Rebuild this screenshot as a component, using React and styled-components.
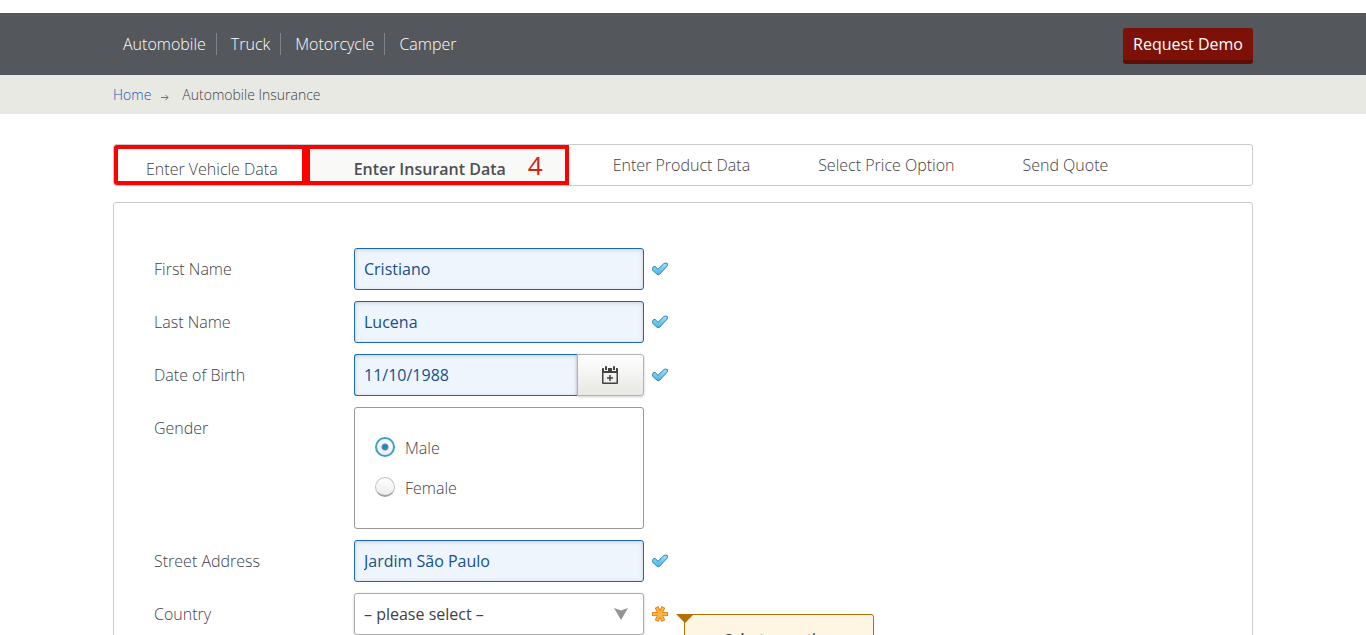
import React, { useState } from "react";
import styled, { createGlobalStyle, css } from "styled-components";

const GlobalStyle = createGlobalStyle`
  *, *::before, *::after { box-sizing: border-box; }
  body {
    margin: 0;
    background: #fff;
    color: #3f4145;
    font: 300 16px/24px "Open Sans", sans-serif;
  }
  button, input, select { font: inherit; color: inherit; }
`;

const Container = styled.div`
  width: 100%;
  max-width: 1140px;
  margin: 0 auto;
`;

const Page = styled.div`
  padding-top: 13px;
`;

const TopBar = styled.header`
  background: #54575b;
`;

const TopBarInner = styled(Container)`
  display: flex;
  align-items: center;
  justify-content: space-between;
  height: 62px;
`;

const Nav = styled.nav`
  display: flex;
  align-items: center;
`;

const NavLink = styled.a`
  padding: 0 10px 0 14px;
  line-height: 22px;
  color: #fff;
  text-decoration: none;
  border-right: 1px solid #7f8386;
  &:first-child { padding-left: 10px; }
  &:last-child { border-right: 0; }
`;

const DemoButton = styled.button`
  height: 36px;
  margin-top: 4px;
  padding: 0 10px;
  border: 0;
  border-bottom: 4px solid #5f0c07;
  border-radius: 3px;
  background: #7d1108;
  color: #fff;
  font-weight: 400;
  line-height: 32px;
`;

const BreadcrumbBar = styled.div`
  background: #e9e9e4;
`;

const Breadcrumb = styled(Container).attrs({ as: "nav" })`
  display: flex;
  align-items: center;
  height: 39px;
  font-size: 14px;
  line-height: 20px;
`;

const Crumb = styled.a`
  color: #0f5aac;
  text-decoration: none;
`;

const CrumbArrow = styled.svg`
  width: 9px;
  height: 8px;
  margin: 4px 13px 0 9px;
  fill: none;
  stroke: #6f7275;
`;

const Main = styled(Container).attrs({ as: "main" })`
  padding: 30px 0 40px;
`;

const Steps = styled.ol`
  display: flex;
  height: 42px;
  margin: 0 0 16px;
  padding: 0;
  list-style: none;
  border: 1px solid #ccc;
  border-radius: 3px;
`;

const Step = styled.li`
  display: flex;
  align-items: center;
  padding: 0 34px;
  white-space: nowrap;
  ${(p) => p.$marked && css`
    padding: 8px 22px 0 28px;
    border: 4px solid #f00;
  `}
  ${(p) => p.$first && css`
    padding-right: 24px;
    border-radius: 3px 0 0 3px;
  `}
  ${(p) => p.$current && css`
    padding-left: 44px;
    margin-right: 10px;
    background: #f9f9f7;
    color: #4d4f53;
    font-weight: 600;
  `}
`;

const StepNumber = styled.span`
  margin: 0 0 8px 22px;
  color: #d52314;
  font-size: 26px;
  font-weight: 400;
`;

const Card = styled.form`
  display: flex;
  flex-direction: column;
  gap: 11px;
  padding: 45px 40px 40px;
  border: 1px solid #ccc;
  border-radius: 3px;
`;

const Row = styled.div`
  display: flex;
  align-items: ${(p) => (p.$top ? "flex-start" : "center")};
`;

const labelStyle = css`
  width: 200px;
  flex: none;
  line-height: 42px;
`;
const Label = styled.label`${labelStyle}`;
const GroupLabel = styled.span`${labelStyle}`;

const Field = styled.div`
  display: flex;
  position: relative;
  width: 290px;
`;

const TextInput = styled.input`
  flex: 1;
  min-width: 0;
  height: 42px;
  padding: 0 9px;
  border: 1px solid #1b66b3;
  border-radius: 3px;
  background: #eef5fd;
  box-shadow: inset 0 1px 4px rgba(0, 0, 0, 0.15);
  color: #174f8c;
  font-weight: 400;
  outline: 0;
  ${(p) => p.$joined && css`
    border-right: 0;
    border-radius: 3px 0 0 3px;
  `}
`;

const CalendarButton = styled.button`
  display: flex;
  align-items: center;
  justify-content: center;
  width: 67px;
  height: 42px;
  padding: 0 2px 0 0;
  border: 1px solid #b2b3b3;
  border-radius: 0 3px 3px 0;
  background: linear-gradient(#fff, #e7e7e3);
  box-shadow: 0 1px 3px rgba(0, 0, 0, 0.2);
`;

const SelectBox = styled.select`
  width: 100%;
  height: 42px;
  padding: 0 9px;
  appearance: none;
  border: 1px solid #adadad;
  border-radius: 3px;
  background: #fff;
  box-shadow: 0 1px 3px rgba(0, 0, 0, 0.2);
  font-weight: 400;
`;

const SelectArrow = styled.svg`
  position: absolute;
  top: 15px;
  right: 16px;
  pointer-events: none;
`;

const RadioGroup = styled.div`
  display: flex;
  flex-direction: column;
  gap: 16px;
  width: 290px;
  height: 122px;
  padding: 28px 20px;
  border: 1px solid #979797;
  border-radius: 3px;
`;

const RadioLabel = styled.label`
  display: flex;
  align-items: center;
  gap: 10px;
`;

const Radio = styled.input`
  width: 20px;
  height: 20px;
  margin: 0 0 2px;
  appearance: none;
  border: 1px solid #c4c4c4;
  border-bottom: 2px solid #a0a0a0;
  border-radius: 50%;
  background: linear-gradient(#fff, #ebebeb);
  &:checked {
    border: 2px solid #3d9fcf;
    background: radial-gradient(circle, #3183ae 0 2px, #4798c3 3px, transparent 4px),
      linear-gradient(#fff, #ececec);
  }
`;

const StatusIcon = styled.svg`
  flex: none;
  width: 16px;
  height: 16px;
  margin-left: 8px;
`;

const Tooltip = styled.div`
  position: absolute;
  top: 21px;
  left: 330px;
  width: 190px;
  padding: 14px 16px;
  border: 1px solid #b57100;
  border-radius: 0 3px 3px 3px;
  background: #fef5e3;
  font-size: 14px;
  font-weight: 600;
  line-height: 20px;
  text-align: center;
`;

const TooltipTail = styled.svg`
  position: absolute;
  top: -1px;
  left: -9px;
`;

function Valid() {
  return (
    <StatusIcon viewBox="0 0 16 16" role="img" aria-label="Valid">
      <defs>
        <linearGradient id="tick" x1="0" y1="0" x2="0" y2="1">
          <stop offset="0" stopColor="#a2e2fb" />
          <stop offset="1" stopColor="#48b3e3" />
        </linearGradient>
      </defs>
      <path
        d="M.6 7.4Q.7 5.2 3 5.4L6 8.3 11.8 2.6Q13.2 1.7 15.3 2.4V4.9L7.6 13.2Q6.3 14.3 5 13.2L.6 9.2Z"
        fill="url(#tick)"
        stroke="#2f83ab"
        strokeLinejoin="round"
      />
    </StatusIcon>
  );
}

function Required() {
  return (
    <StatusIcon viewBox="0 0 16 16" role="img" aria-label="Required">
      <g fill="none">
        <path d="M0 8h16M4.5 1l7 14M11.5 1l-7 14" stroke="#e08216" strokeWidth="4" />
        <path d="M.8 8h14.4M4.9 1.8l6.2 12.4M11.1 1.8 4.9 14.2" stroke="#ffb444" strokeWidth="2.3" />
      </g>
    </StatusIcon>
  );
}

function CalendarIcon() {
  return (
    <svg width="16" height="18" viewBox="0 0 16 18" aria-hidden="true">
      <path
        fill="#434343"
        fillRule="evenodd"
        d="M1 2h1v3h4V2h4v3h4V2h1q1 0 1 1v14q0 1-1 1H1q-1 0-1-1V3q0-1 1-1ZM1.5 7v9.5h13V7Z"
      />
      <path fill="#434343" d="M3 1q0-1 1-1t1 1v3H3ZM11 1q0-1 1-1t1 1v3h-2ZM7.25 9h1.5v2.2H11v1.5H8.75V15h-1.5v-2.3H5v-1.5h2.25Z" />
    </svg>
  );
}

function TextRow({ id, label, value }) {
  return (
    <Row>
      <Label htmlFor={id}>{label}</Label>
      <Field>
        <TextInput id={id} defaultValue={value} />
      </Field>
      <Valid />
    </Row>
  );
}

export default function App() {
  const [gender, setGender] = useState("Male");
  return (
    <Page>
      <GlobalStyle />
      <TopBar>
        <TopBarInner>
          <Nav>
            {["Automobile", "Truck", "Motorcycle", "Camper"].map((name) => (
              <NavLink key={name} href="#">{name}</NavLink>
            ))}
          </Nav>
          <DemoButton type="button">Request Demo</DemoButton>
        </TopBarInner>
      </TopBar>
      <BreadcrumbBar>
        <Breadcrumb>
          <Crumb href="#">Home</Crumb>
          <CrumbArrow viewBox="0 0 9 8" aria-hidden="true">
            <path d="M1 4.5h7M5.5 2 8 4.5 5.5 7" />
          </CrumbArrow>
          <span>Automobile Insurance</span>
        </Breadcrumb>
      </BreadcrumbBar>
      <Main>
        <Steps>
          <Step $marked $first>Enter Vehicle Data</Step>
          <Step $marked $current aria-current="step">
            Enter Insurant Data <StepNumber>4</StepNumber>
          </Step>
          <Step>Enter Product Data</Step>
          <Step>Select Price Option</Step>
          <Step>Send Quote</Step>
        </Steps>
        <Card>
          <TextRow id="firstname" label="First Name" value="Cristiano" />
          <TextRow id="lastname" label="Last Name" value="Lucena" />
          <Row>
            <Label htmlFor="birthdate">Date of Birth</Label>
            <Field>
              <TextInput id="birthdate" defaultValue="11/10/1988" $joined />
              <CalendarButton type="button" aria-label="Open calendar">
                <CalendarIcon />
              </CalendarButton>
            </Field>
            <Valid />
          </Row>
          <Row $top>
            <GroupLabel id="gender-label">Gender</GroupLabel>
            <RadioGroup role="radiogroup" aria-labelledby="gender-label">
              {["Male", "Female"].map((name) => (
                <RadioLabel key={name}>
                  <Radio
                    type="radio"
                    name="gender"
                    value={name}
                    checked={gender === name}
                    onChange={() => setGender(name)}
                  />
                  {name}
                </RadioLabel>
              ))}
            </RadioGroup>
          </Row>
          <TextRow id="streetaddress" label="Street Address" value="Jardim São Paulo" />
          <Row>
            <Label htmlFor="country">Country</Label>
            <Field>
              <SelectBox id="country" defaultValue="">
                <option value="">– please select –</option>
              </SelectBox>
              <SelectArrow width="14" height="12" viewBox="0 0 14 12" aria-hidden="true">
                <path d="M0 0 7 2.5 14 0 7 12Z" fill="#949494" />
              </SelectArrow>
              <Tooltip role="tooltip">
                <TooltipTail width="18" height="9" viewBox="0 0 18 9" aria-hidden="true">
                  <path d="M0 0h18L9 9Z" fill="#b57100" />
                </TooltipTail>
                Select an option
              </Tooltip>
            </Field>
            <Required />
          </Row>
        </Card>
      </Main>
    </Page>
  );
}
